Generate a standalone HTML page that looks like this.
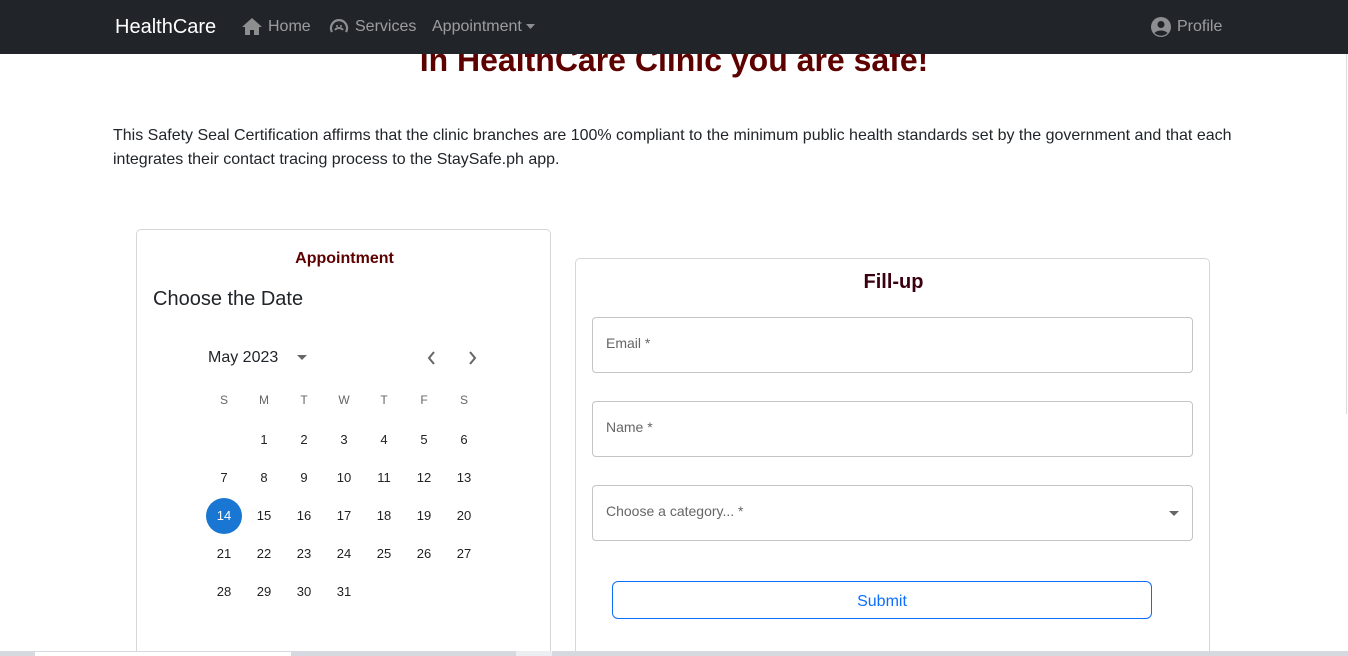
<!DOCTYPE html>
<html style="overflow:hidden;height:656px"><head><style>
*{box-sizing:border-box;margin:0;padding:0}
body{width:1348px;height:656px;overflow:hidden;position:relative;background:#fff;font-family:"Liberation Sans",sans-serif;color:#212529}
.nav{position:absolute;left:0;top:0;width:1348px;height:54px;background:#212529}
.nav span{position:absolute;top:18px;font-size:16px;color:rgba(255,255,255,.55)}
.brand{left:115px!important;top:16px!important;font-size:20px!important;color:#fff!important}
h1{position:absolute;top:42px;left:0;width:1348px;text-align:center;font-size:32px;font-weight:bold;color:#5c0000}
p.t{position:absolute;left:113px;top:124px;width:1130px;font-size:16px;line-height:24px;color:#212529}
.card{position:absolute;border:1px solid #d6d6d6;border-radius:5px;background:#fff}
.ab{position:absolute}
.cal span{position:absolute;width:36px;margin-left:-18px;text-align:center;font-size:13px;color:#222}
.inp{position:absolute;left:16px;width:601px;height:56px;border:1px solid #c4c4c4;border-radius:4px;font-size:14px;color:#666;padding:17px 13px}
</style></head><body>
<h1>In HealthCare Clinic you are safe!</h1>
<div class="nav">
<span class="brand">HealthCare</span>
<svg class="ab" style="left:242px;top:17px" width="20" height="18" viewBox="0 0 20 18"><path d="M10 1L0 10h3v8h5v-5h4v5h5v-8h3z" fill="#8c8e90"/></svg>
<span style="left:268px">Home</span>
<svg class="ab" style="left:329px;top:16px" width="20" height="20" viewBox="0 0 20 20"><path d="M3 16A8 8 0 1 1 17 16" fill="none" stroke="#8c8e90" stroke-width="2.2"/><path d="M6 14a5 5 0 0 1 8 0" fill="none" stroke="#8c8e90" stroke-width="2"/><circle cx="8" cy="10" r="1" fill="#8c8e90"/><circle cx="12" cy="10" r="1" fill="#8c8e90"/></svg>
<span style="left:355px">Services</span>
<span style="left:432px">Appointment</span>
<svg class="ab" style="left:526px;top:24px" width="9" height="5"><path d="M0 0h9L4.5 5z" fill="#8c8e90"/></svg>
<svg class="ab" style="left:1151px;top:17px" width="20" height="20" viewBox="0 0 20 20"><circle cx="10" cy="10" r="10" fill="#8c8e90"/><circle cx="10" cy="7.5" r="3.5" fill="#212529"/><path d="M3.5 16a8 6 0 0 1 13 0a9 9 0 0 1-13 0z" fill="#212529"/></svg>
<span style="left:1177px">Profile</span>
</div>
<p class="t">This Safety Seal Certification affirms that the clinic branches are 100% compliant to the minimum public health standards set by the government and that each integrates their contact tracing process to the StaySafe.ph app.</p>

<div class="card" style="left:136px;top:229px;width:415px;height:440px">
<div class="ab" style="left:0;top:20px;width:415px;text-align:center;font-weight:bold;font-size:16px;color:#5c0000">Appointment</div>
<div class="ab" style="left:16px;top:58px;font-size:20px">Choose the Date</div>
<div class="ab" style="left:71px;top:119px;font-size:16px">May 2023</div>
<svg class="ab" style="left:160px;top:125px" width="10" height="5"><path d="M0 0h10L5 5z" fill="#666"/></svg>
<svg class="ab" style="left:290px;top:121px" width="10" height="14"><path d="M7 1L2 7l5 6" fill="none" stroke="#666" stroke-width="2"/></svg>
<svg class="ab" style="left:330px;top:121px" width="10" height="14"><path d="M3 1l5 6-5 6" fill="none" stroke="#666" stroke-width="2"/></svg>
<div class="ab" style="left:69px;top:268px;width:36px;height:36px;border-radius:50%;background:#1976d2"></div>
<div class="cal">
<span style="left:87px;top:163px;color:#666;font-size:12px">S</span><span style="left:127px;top:163px;color:#666;font-size:12px">M</span><span style="left:167px;top:163px;color:#666;font-size:12px">T</span><span style="left:207px;top:163px;color:#666;font-size:12px">W</span><span style="left:247px;top:163px;color:#666;font-size:12px">T</span><span style="left:287px;top:163px;color:#666;font-size:12px">F</span><span style="left:327px;top:163px;color:#666;font-size:12px">S</span>
<span style="left:127px;top:202px">1</span><span style="left:167px;top:202px">2</span><span style="left:207px;top:202px">3</span><span style="left:247px;top:202px">4</span><span style="left:287px;top:202px">5</span><span style="left:327px;top:202px">6</span>
<span style="left:87px;top:240px">7</span><span style="left:127px;top:240px">8</span><span style="left:167px;top:240px">9</span><span style="left:207px;top:240px">10</span><span style="left:247px;top:240px">11</span><span style="left:287px;top:240px">12</span><span style="left:327px;top:240px">13</span>
<span style="left:87px;top:278px;color:#fff">14</span><span style="left:127px;top:278px">15</span><span style="left:167px;top:278px">16</span><span style="left:207px;top:278px">17</span><span style="left:247px;top:278px">18</span><span style="left:287px;top:278px">19</span><span style="left:327px;top:278px">20</span>
<span style="left:87px;top:316px">21</span><span style="left:127px;top:316px">22</span><span style="left:167px;top:316px">23</span><span style="left:207px;top:316px">24</span><span style="left:247px;top:316px">25</span><span style="left:287px;top:316px">26</span><span style="left:327px;top:316px">27</span>
<span style="left:87px;top:354px">28</span><span style="left:127px;top:354px">29</span><span style="left:167px;top:354px">30</span><span style="left:207px;top:354px">31</span>
</div>
</div>

<div class="card" style="left:575px;top:258px;width:635px;height:420px">
<div class="ab" style="left:0;top:12px;width:635px;text-align:center;font-weight:bold;font-size:20px;color:#3a0010">Fill-up</div>
<div class="inp" style="top:58px">Email *</div>
<div class="inp" style="top:142px">Name *</div>
<div class="inp" style="top:226px">Choose a category... *</div>
<svg class="ab" style="left:593px;top:252px" width="10" height="5"><path d="M0 0h10L5 5z" fill="#666"/></svg>
<div class="ab" style="left:36px;top:322px;width:540px;height:38px;border:1px solid #0d6efd;border-radius:6px;color:#0d6efd;text-align:center;font-size:16px;line-height:40px">Submit</div>
</div>

<div class="ab" style="left:0;top:651px;width:1348px;height:5px;background:#d6d9df"></div>
<div class="ab" style="left:35px;top:652px;width:256px;height:4px;background:#fff"></div>
<div class="ab" style="left:516px;top:651px;width:36px;height:5px;background:#eceef1"></div>
<div class="ab" style="left:1346px;top:54px;width:1px;height:360px;background:#ddd"></div>
</body></html>
